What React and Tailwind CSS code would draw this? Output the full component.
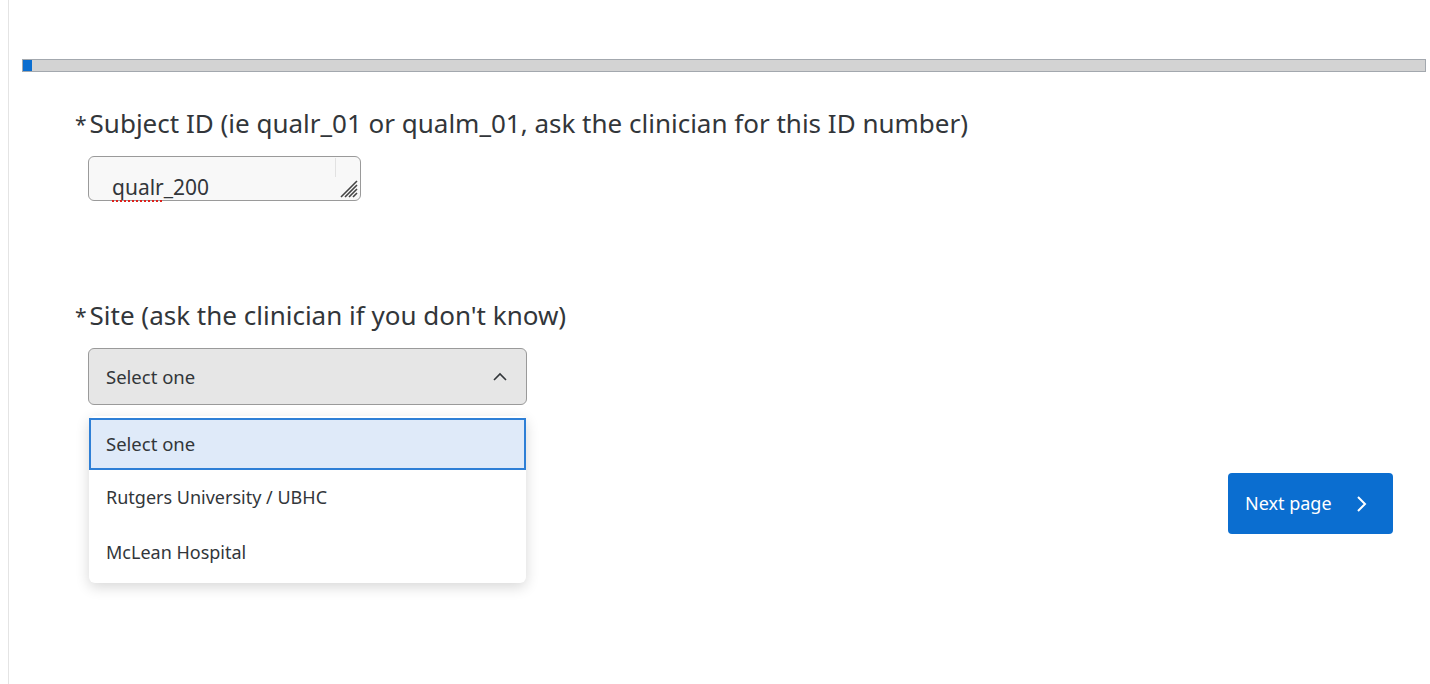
import React from "react";

export default function App() {
  return (
    <div className="w-[1430px] h-[684px] bg-white flex overflow-hidden" style={{ fontFamily: "'Noto Sans', 'Open Sans', sans-serif" }}>
      <div className="w-[9px] border-r border-[#e4e4e4] shrink-0" />
      <div className="flex-1 flex flex-col pl-[13px] pr-[4px] pt-[59px]">
        <div className="h-[13px] bg-[#d3d3d3] border border-[#a3a8ae] flex">
          <div className="w-[9px] bg-[#0b6ed0]" />
        </div>
        <div className="flex flex-col pl-[53px] pt-[35px]">
          <div className="flex items-start text-[26px] leading-[32px] text-[#32363a]">
            <span className="text-[21px] mr-[3px] mt-[1px]">*</span>
            <span>Subject ID (ie qualr_01 or qualm_01, ask the clinician for this ID number)</span>
          </div>
          <div className="ml-[13px] mt-[16px] relative w-[273px] h-[45px] rounded-[6px] border border-[#9a9a9a] bg-[#f8f8f8]">
            <div className="absolute left-[246px] top-[1px] h-[19px] border-l border-[#e2e2e2]" />
            <span className="absolute left-[23px] top-[17px] text-[21px] leading-[26px] text-[#32363a] whitespace-nowrap">
              <span className="underline decoration-dotted decoration-[#e0201b] decoration-2 underline-offset-[5px]" style={{ textDecorationSkipInk: "none" }}>qualr</span>
              <span>_200</span>
            </span>
            <svg className="absolute right-[1px] bottom-[1px]" width="24" height="24" viewBox="0 0 24 24">
              <path d="M22 6 L6 22 M22 10 L10 22 M22 14 L14 22 M22 18 L18 22" stroke="#444" strokeWidth="1.6" />
            </svg>
          </div>

          <div className="flex items-start text-[26px] leading-[32px] text-[#32363a] mt-[98px]">
            <span className="text-[21px] mr-[3px] mt-[1px]">*</span>
            <span>Site (ask the clinician if you don't know)</span>
          </div>

          <div className="flex items-start mt-[16px]">
            <div className="ml-[13px] relative w-[439px]">
              <div className="h-[57px] rounded-[6px] border border-[#9a9a9a] bg-[#e6e6e6] flex items-center justify-between pl-[17px] pr-[18px]">
                <span className="text-[18.5px] text-[#32363a]">Select one</span>
                <svg width="16" height="10" viewBox="0 0 16 10"><path d="M2 8 L8 2 L14 8" fill="none" stroke="#32363a" strokeWidth="1.6" /></svg>
              </div>
              <div className="absolute left-[1px] top-[68px] w-[437px] bg-white rounded-[6px] shadow-[0_4px_14px_rgba(0,0,0,0.16)] pt-[2px] pb-[4px] z-10">
                <div className="h-[52px] bg-[#dfeaf9] border-2 border-[#2e7fd6] flex items-center pl-[15px] text-[18.5px] text-[#32363a]">Select one</div>
                <div className="h-[55px] flex items-center pl-[17px] text-[18px] text-[#32363a]">Rutgers University / UBHC</div>
                <div className="h-[54px] flex items-center pl-[17px] text-[18px] text-[#32363a]">McLean Hospital</div>
              </div>
            </div>
            <div className="flex-1" />
            <button className="mt-[125px] mr-[33px] w-[165px] h-[61px] rounded-[4px] bg-[#0b6ed0] text-white text-[18px] flex items-center pl-[17px]">
              <span>Next page</span>
              <svg className="ml-[23px]" width="12" height="18" viewBox="0 0 12 18"><path d="M3 2 L10 9 L3 16" fill="none" stroke="white" strokeWidth="2" /></svg>
            </button>
          </div>
        </div>
      </div>
    </div>
  );
}
